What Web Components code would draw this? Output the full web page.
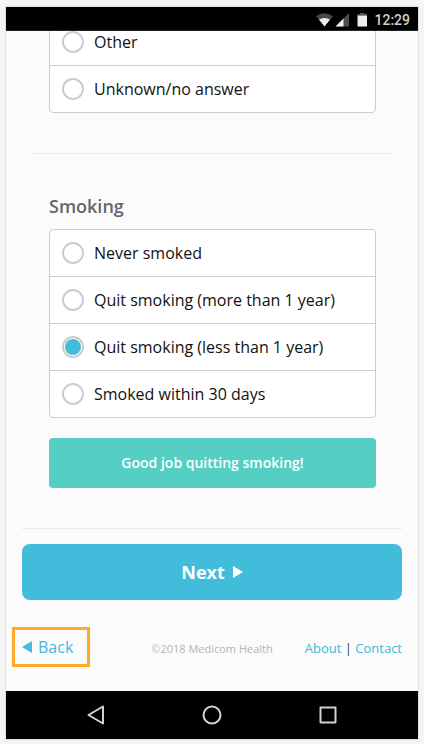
<!DOCTYPE html>
<html lang="en">
<head>
<meta charset="utf-8">
<meta name="viewport" content="width=device-width, initial-scale=1">
<title>Smoking</title>
<style>
  body { margin: 0; background: #f6f6f6; font-family: "Open Sans", "Noto Sans", sans-serif; color: #111; }
</style>
</head>
<body>
<phone-frame>
  <status-bar slot="status" time="12:29"></status-bar>
  <radio-list name="previous" options="Other|Unknown/no answer"></radio-list>
  <form-section>
    <radio-list name="smoking" heading="Smoking" value="2"
      options="Never smoked|Quit smoking (more than 1 year)|Quit smoking (less than 1 year)|Smoked within 30 days"></radio-list>
    <feedback-note>Good job quitting smoking!</feedback-note>
  </form-section>
  <next-button slot="action">Next</next-button>
  <page-footer slot="footer">©2018 Medicom Health</page-footer>
  <nav-bar slot="nav"></nav-bar>
</phone-frame>
<script>
const define = (name, html, setup) => {
  const template = document.createElement('template');
  template.innerHTML = html;
  customElements.define(name, class extends HTMLElement {
    constructor() {
      super();
      this.attachShadow({ mode: 'open' }).append(template.content.cloneNode(true));
    }
    connectedCallback() { if (setup) setup(this, this.shadowRoot); }
  });
};

define('phone-frame', `
  <style>
    :host { display: flex; flex-direction: column; box-sizing: border-box; height: 100vh; padding: 7px 6px 5px; }
    .phone { flex: 1; min-height: 0; display: flex; flex-direction: column; background: #fbfbfb;
      box-shadow: 0 0 0 1px #e2e2e2, 0 0 8px #ececec; }
    /* The page is scrolled to its end, so content is held against the bottom. */
    main { flex: 1; min-height: 0; overflow: hidden; display: flex; flex-direction: column; justify-content: flex-end; padding: 0 16px; }
    .sections { padding: 0 8px 40px; }
    .action { border-top: 1px solid #e9e9e9; padding-top: 15px; }
    .sections ::slotted(radio-list) { padding: 0 18px 40px 19px; }
  </style>
  <div class="phone">
    <slot name="status"></slot>
    <main>
      <div class="sections"><slot></slot></div>
      <div class="action"><slot name="action"></slot></div>
      <slot name="footer"></slot>
    </main>
    <slot name="nav"></slot>
  </div>`);

define('status-bar', `
  <style>
    :host { display: flex; align-items: center; justify-content: flex-end; height: 24px; box-sizing: border-box;
      flex: none; padding: 2px 8px 0 0; background: #000; border-bottom: 1px solid #222; color: #d0d0d0;
      font: 500 14px/20px Roboto, sans-serif; }
    svg { display: block; }
    time { margin-left: 6px; }
  </style>
  <svg width="52" height="16" viewBox="0 0 52 16" aria-hidden="true">
    <path d="M0 4.200Q8.500-1.800 17 4.200L8.500 14.500Z" fill="#474747"/>
    <path d="M3 7.500Q8.500 4.500 14 7.500L8.500 14.500Z" fill="#eee"/>
    <path d="M33 1V14.500H19.500Z" fill="#4d4d4d"/>
    <path d="M27.500 6.500V14.500H19.500Z" fill="#eee"/>
    <path d="M41.500 3.500V2H44V1H48.500V2H51V3.500Z" fill="#555"/>
    <path d="M41.500 3.500H51V14.500H41.500Z" fill="#eee"/>
  </svg>
  <time></time>`, (el, root) => { root.querySelector('time').textContent = el.getAttribute('time'); });

define('form-section', `
  <style>
    :host { display: block; border-top: 1px solid #ebebeb; padding: 40px 18px 0 19px; }
    ::slotted(feedback-note) { margin-top: 20px; }
  </style>
  <slot></slot>`);

define('radio-list', `
  <style>
    :host { display: block; }
    fieldset { margin: 0; padding: 0; border: 0; min-width: 0; }
    legend { padding: 0 0 11px; font-weight: 600; font-size: 18px; line-height: 24px; color: #666; }
    legend[hidden] { display: none; }
    .list { background: #fff; border: 1px solid #ccc; border-radius: 4px; }
    label { display: flex; align-items: center; gap: 10px; height: 46px; padding: 0 12px; font-size: 16px; line-height: 24px; }
    label + label { border-top: 1px solid #ccc; }
    input { appearance: none; flex: none; box-sizing: border-box; width: 22px; height: 22px; margin: 0;
      border: 2px solid #ccc; border-radius: 50%; padding: 1px; background: #fff; }
    input:checked { background: #41bcda content-box; }
  </style>
  <fieldset><legend></legend><div class="list"></div></fieldset>`, (el, root) => {
  const legend = root.querySelector('legend');
  legend.textContent = el.getAttribute('heading') || '';
  legend.hidden = !el.hasAttribute('heading');
  const rows = el.getAttribute('options').split('|').map((text, i) => {
    const label = document.createElement('label');
    const input = document.createElement('input');
    input.type = 'radio';
    input.name = el.getAttribute('name');
    input.value = i;
    input.checked = el.getAttribute('value') === String(i);
    const span = document.createElement('span');
    span.textContent = text;
    label.append(input, span);
    return label;
  });
  root.querySelector('.list').replaceChildren(...rows);
});

define('feedback-note', `
  <style>
    :host { display: block; padding: 15px; background: #55cec4; border-radius: 4px; color: #fff;
      font-weight: 600; font-size: 14px; line-height: 20px; text-align: center; }
  </style>
  <slot></slot>`);

define('next-button', `
  <style>
    :host { display: block; }
    button { display: flex; align-items: center; justify-content: center; gap: 8px; width: 100%; height: 56px;
      border: 0; border-radius: 8px; background: #41bcda; color: #fff; font: inherit; font-weight: 700; font-size: 18px; line-height: 24px; }
  </style>
  <button type="button"><span><slot></slot></span>
    <svg width="10" height="12" viewBox="0 0 10 12" aria-hidden="true"><path d="M0 0L10 6L0 12Z" fill="#fff"/></svg>
  </button>`);

define('page-footer', `
  <style>
    :host { display: grid; grid-template-columns: 1fr auto 1fr; align-items: baseline; padding: 35px 0 30px; line-height: 24px; }
    a { color: #41b8d8; text-decoration: none; }
    .back { justify-self: start; display: flex; align-items: center; gap: 6px; font-size: 16px; position: relative; }
    .back::after { content: ""; position: absolute; inset: -8px -17px -8px -10px; border: 3px solid #ffa92b; }
    small { font-size: 11px; color: #b5b5b5; }
    nav { justify-self: end; font-size: 13px; color: #336; }
  </style>
  <a class="back" href="#back"><svg width="10" height="12" viewBox="0 0 10 12" aria-hidden="true"><path d="M10 0L0 6L10 12Z" fill="#41bcda"/></svg><span>Back</span></a>
  <small><slot></slot></small>
  <nav><a href="#about">About</a> | <a href="#contact">Contact</a></nav>`);

define('nav-bar', `
  <style>
    :host { display: flex; align-items: center; justify-content: center; gap: 92px; height: 48px; flex: none; background: #000; }
    button { width: 24px; height: 24px; padding: 0; border: 0; background: none; }
    svg { display: block; fill: none; stroke: #d2d2d2; stroke-width: 2; stroke-linejoin: round; }
  </style>
  <button type="button" aria-label="Back"><svg width="24" height="24" viewBox="0 0 24 24"><path d="M4.500 12L19 3.500V20.500Z"/></svg></button>
  <button type="button" aria-label="Home"><svg width="24" height="24" viewBox="0 0 24 24"><circle cx="12" cy="12" r="8.500"/></svg></button>
  <button type="button" aria-label="Recent apps"><svg width="24" height="24" viewBox="0 0 24 24"><path d="M4.500 4.500H19.500V19.500H4.500Z"/></svg></button>`);
</script>
</body>
</html>
